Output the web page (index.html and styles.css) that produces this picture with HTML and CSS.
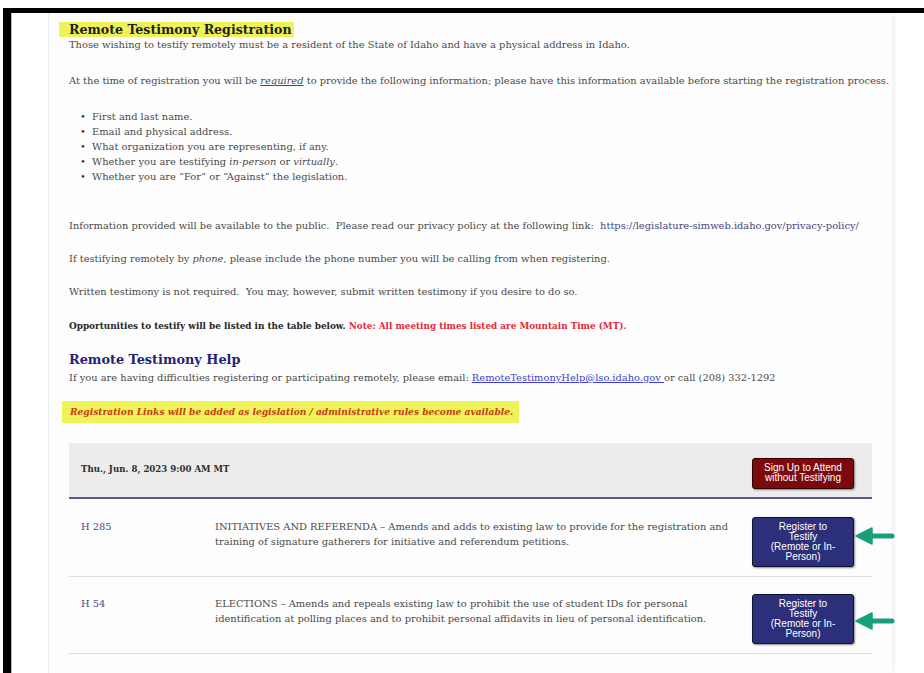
FILE: index.html
```html
<!DOCTYPE html>
<html lang="en">
<head>
<meta charset="utf-8">
<title>Remote Testimony Registration</title>
<link rel="stylesheet" href="styles.css">
</head>
<body>
<div class="window">
  <div class="gutter"></div>
  <main class="panel">
    <h1 class="title"><span class="hl">Remote Testimony Registration</span></h1>
    <p class="lead">Those wishing to testify remotely must be a resident of the State of Idaho and have a physical address in Idaho.</p>
    <p class="req">At the time of registration you will be <em class="u">required</em> to provide the following information; please have this information available before starting the registration process.</p>
    <ul class="needs">
      <li>First and last name.</li>
      <li>Email and physical address.</li>
      <li>What organization you are representing, if any.</li>
      <li>Whether you are testifying <em>in-person</em> or <em>virtually</em>.</li>
      <li>Whether you are “For” or “Against” the legislation.</li>
    </ul>
    <p class="info">Information provided will be available to the public.&nbsp; Please read our privacy policy at the following link:&nbsp; <a class="plain" href="#">https://legislature-simweb.idaho.gov/privacy-policy/</a></p>
    <p class="gap">If testifying remotely by <em>phone</em>, please include the phone number you will be calling from when registering.</p>
    <p class="gap">Written testimony is not required.&nbsp; You may, however, submit written testimony if you desire to do so.</p>
    <p class="gap strong">Opportunities to testify will be listed in the table below. <span class="warn">Note: All meeting times listed are Mountain Time (MT).</span></p>
    <h2 class="help">Remote Testimony Help</h2>
    <p class="helptext">If you are having difficulties registering or participating remotely, please email: <a class="mail" href="#">RemoteTestimonyHelp@lso.idaho.gov </a>or call (208) 332-1292</p>
    <p class="notice"><span>Registration Links will be added as legislation / administrative rules become available.</span></p>

    <section class="meeting">
      <header class="meeting-head">
        <span class="when">Thu., Jun. 8, 2023 9:00 AM MT</span>
        <a class="btn btn-red" href="#">Sign Up to Attend without Testifying</a>
      </header>
      <div class="bill">
        <a class="bill-id" href="#">H 285</a>
        <div class="bill-desc">INITIATIVES AND REFERENDA – Amends and adds to existing law to provide for the registration and training of signature gatherers for initiative and referendum petitions.</div>
        <div class="bill-action">
          <a class="btn btn-blue" href="#">Register to Testify (Remote or In-Person)</a>
          <svg class="pointer pointer-a" width="40" height="18" viewBox="0 0 40 18"><path d="M16 9H37" stroke="#18a07b" stroke-width="5" stroke-linecap="round"/><path d="M1 9L17 1V17Z" fill="#18a07b" stroke="#18a07b" stroke-width="1.5" stroke-linejoin="round"/></svg>
        </div>
      </div>
      <div class="bill">
        <a class="bill-id" href="#">H 54</a>
        <div class="bill-desc">ELECTIONS – Amends and repeals existing law to prohibit the use of student IDs for personal identification at polling places and to prohibit personal affidavits in lieu of personal identification.</div>
        <div class="bill-action">
          <a class="btn btn-blue" href="#">Register to Testify (Remote or In-Person)</a>
          <svg class="pointer pointer-b" width="40" height="18" viewBox="0 0 40 18"><path d="M16 9H37" stroke="#18a07b" stroke-width="5" stroke-linecap="round"/><path d="M1 9L17 1V17Z" fill="#18a07b" stroke="#18a07b" stroke-width="1.5" stroke-linejoin="round"/></svg>
        </div>
      </div>
    </section>
  </main>
</div>
</body>
</html>
```

FILE: styles.css
```css
html, body {
  margin: 0;
  padding: 0;
  background: #fff;
  height: 100%;
  overflow: hidden;
}

body {
  padding-top: 8px;
  box-sizing: border-box;
  font-family: "DejaVu Serif", "Liberation Serif", serif;
  font-size: 9.9px;
  color: #4a4a4a;
}

/* framed window */
.window {
  display: flex;
  height: 100%;
  margin-left: 3px;
  border-top: 5px solid #000;
  border-left: 8px solid #000;
  box-sizing: border-box;
}

.gutter {
  width: 38px;
  flex: none;
  border-left: 1px solid #b8b8b8;
  border-right: 1px solid #ececec;
  box-sizing: border-box;
  background: #fff;
}

.panel {
  width: 843px;
  flex: none;
  background: #fdfdfd;
  padding: 9px 0 0 20px;
  box-sizing: border-box;
  box-shadow: 3px 0 5px -1px rgba(0, 0, 0, 0.07);
}

p {
  margin: 0;
  line-height: 14px;
  white-space: nowrap;
}

.title {
  margin: 0;
  font-size: 12.6px;
  line-height: 15px;
  color: #1f1f1f;
}

.hl {
  display: inline-block;
  background: #eef35a;
  margin-left: -10px;
  padding: 0 2px 0 10px;
}

.lead { margin-top: 1px; }
.req { margin-top: 22px; }

.u {
  text-decoration: underline;
}

.needs {
  list-style: none;
  margin: 21px 0 0;
  padding-left: 23px;
}

.needs li {
  line-height: 15px;
  height: 15px;
}

.needs li::before {
  content: "•";
  display: inline-block;
  width: 12px;
  margin-left: -12px;
  color: #333;
}

.info { margin-top: 35px; }
.gap { margin-top: 19px; }

.strong {
  margin-top: 20px;
  font-weight: bold;
  font-size: 8.85px;
  color: #262626;
}

.warn { color: #e8283a; }

.plain {
  color: #45457a;
  text-decoration: none;
}

.help {
  margin: 18px 0 0;
  font-size: 12.85px;
  line-height: 18px;
  color: #23237a;
}

.helptext { margin-top: 2px; }

.mail {
  color: #3f3fd0;
  text-decoration: underline;
}

.notice {
  margin: 16px 0 0 -7px;
}

.notice span {
  display: inline-block;
  background: #eef35a;
  padding: 4px 6px 4px 8px;
  font-size: 9.1px;
  font-style: italic;
  font-weight: bold;
  color: #cc3a14;
}

/* meeting table */
.meeting {
  margin-top: 20px;
  width: 803px;
}

.meeting-head {
  display: flex;
  align-items: center;
  justify-content: space-between;
  height: 54px;
  padding: 0 18px 0 12px;
  background: #ececec;
  border-bottom: 2px solid #5c5c8c;
}

.when {
  font-weight: bold;
  font-size: 8.6px;
  color: #2c2c2c;
  margin-top: -2px;
}

.btn {
  display: flex;
  align-items: center;
  justify-content: center;
  width: 102px;
  box-sizing: border-box;
  font-family: "Liberation Sans", Arial, sans-serif;
  font-size: 10px;
  line-height: 10px;
  color: #fff;
  text-align: center;
  text-decoration: none;
  border-radius: 3px;
  box-shadow: 1px 1px 2px rgba(0, 0, 0, 0.45);
}

.btn-red {
  height: 31px;
  padding: 0 6px;
  background: #7c0a0c;
  border: 1px solid #2e0000;
  margin-top: 6px;
}

.btn-blue {
  height: 50px;
  padding: 0 16px;
  background: #2c2f79;
  border: 1px solid #10102a;
}

.bill {
  display: grid;
  grid-template-columns: 134px 537px 102px;
  align-items: start;
  padding: 18px 18px 9px 12px;
  border-bottom: 1px solid #dedede;
}

.bill + .bill {
  padding-top: 17px;
}

.bill-id {
  color: #4a4a86;
  text-decoration: none;
  line-height: 15px;
  padding-top: 2px;
}

.bill-desc {
  line-height: 15px;
  padding: 2px 17px 0 0;
  color: #4a4a4a;
}

.bill-action {
  position: relative;
}

/* callout arrows pointing at the register buttons */
.pointer {
  position: absolute;
  left: 100%;
  margin-left: 1px;
}

.pointer-a { top: 10px; }
.pointer-b { top: 18px; }
```
